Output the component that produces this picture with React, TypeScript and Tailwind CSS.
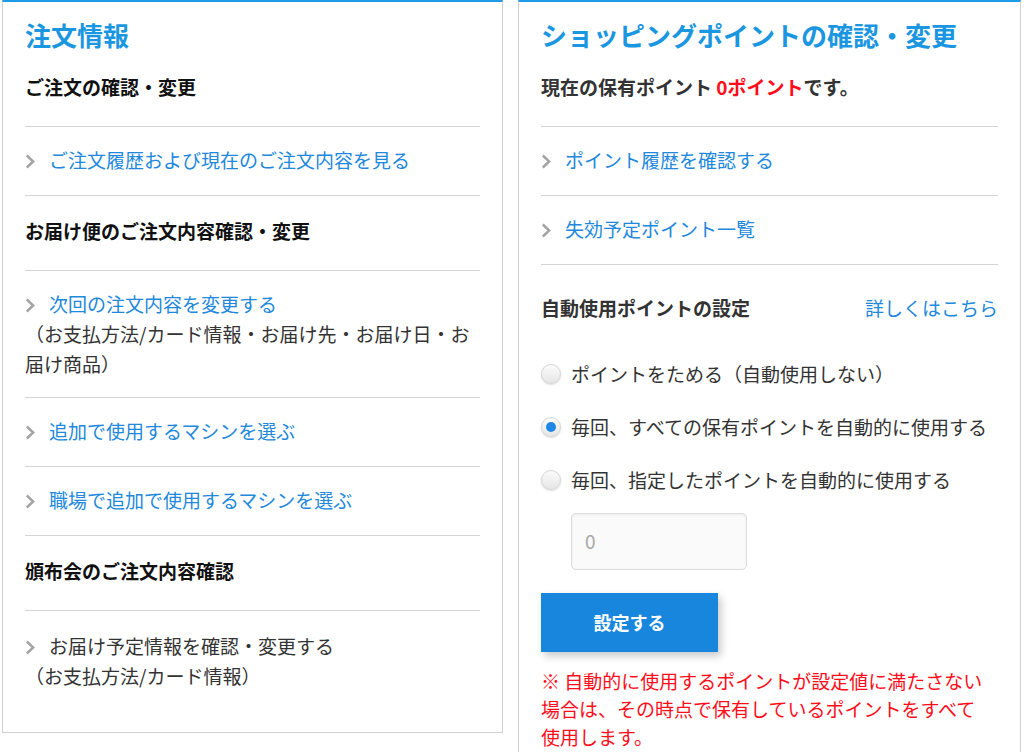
import type { ReactNode } from 'react'

function Chevron() {
  return (
    <svg className="mr-[14px] inline-block align-[-1px]" width="10" height="15" viewBox="0 0 10 15" fill="none">
      <polyline points="1.8,1.5 8.2,7.5 1.8,13.5" stroke="#a3a3a3" strokeWidth="2.4" />
    </svg>
  )
}

function LinkRow({ label, note, className, plain }: { label: string; note?: string; className: string; plain?: boolean }) {
  return (
    <div className={`border-b border-[#d4d4d4] leading-[30px] ${className}`}>
      <Chevron />
      <span className={plain ? 'text-[#333]' : 'text-[#2188dc]'}>{label}</span>
      {note && (
        <>
          <br />
          <span className="text-[#333]">{note}</span>
        </>
      )}
    </div>
  )
}

function SubHeading({ children }: { children: ReactNode }) {
  return <div className="border-b border-[#d4d4d4] pt-[20px] pb-[24px] font-bold leading-[30px] text-[#111]">{children}</div>
}

function Radio({ checked, label }: { checked?: boolean; label: string }) {
  return (
    <label className="flex items-center gap-[10px] leading-[30px] text-[#333]">
      <span className="flex h-[20px] w-[20px] items-center justify-center rounded-full border border-[#d6d6d6] bg-gradient-to-b from-[#fbfbfb] to-[#e6e6e6] shadow-[0_1px_2px_rgba(0,0,0,0.15)]">
        {checked && <span className="h-[10px] w-[10px] rounded-full bg-[#1e88e5]" />}
      </span>
      {label}
    </label>
  )
}

export default function App() {
  return (
    <div className="flex min-h-screen items-start gap-[15px] bg-white pl-[2px] font-['Noto_Sans_CJK_JP',sans-serif] text-[19px]">
      <section className="w-[501px] border border-t-2 border-[#d0d0d0] border-t-[#1e9be6] px-[22px] pt-[16px] pb-[41px]">
        <h1 className="text-[26px] leading-[34px] font-bold text-[#1b96e0]">注文情報</h1>
        <SubHeading>ご注文の確認・変更</SubHeading>
        <LinkRow label="ご注文履歴および現在のご注文内容を見る" className="pt-[18px] pb-[20px]" />
        <SubHeading>お届け便のご注文内容確認・変更</SubHeading>
        <LinkRow
          label="次回の注文内容を変更する"
          note="（お支払方法/カード情報・お届け先・お届け日・お届け商品）"
          className="pt-[18px] pb-[18px]"
        />
        <LinkRow label="追加で使用するマシンを選ぶ" className="pt-[18px] pb-[20px]" />
        <LinkRow label="職場で追加で使用するマシンを選ぶ" className="pt-[18px] pb-[20px]" />
        <SubHeading>頒布会のご注文内容確認</SubHeading>
        <LinkRow
          label="お届け予定情報を確認・変更する"
          note="（お支払方法/カード情報）"
          plain
          className="border-b-0 pt-[20px]"
        />
      </section>

      <section className="w-[503px] border border-t-2 border-[#d0d0d0] border-t-[#1e9be6] px-[22px] pt-[16px] pb-[30px]">
        <h1 className="text-[26px] leading-[34px] font-bold text-[#1b96e0]">ショッピングポイントの確認・変更</h1>
        <div className="border-b border-[#d4d4d4] pt-[20px] pb-[24px] font-bold leading-[30px] text-[#333]">
          現在の保有ポイント <span className="text-[#ff0d1a]">0ポイント</span>です。
        </div>
        <LinkRow label="ポイント履歴を確認する" className="pt-[18px] pb-[20px]" />
        <LinkRow label="失効予定ポイント一覧" className="pt-[18px] pb-[20px]" />

        <div className="flex items-center justify-between pt-[28px] leading-[30px]">
          <span className="font-bold text-[#333]">自動使用ポイントの設定</span>
          <a className="text-[#2188dc]">詳しくはこちら</a>
        </div>

        <div className="mt-[36px] flex flex-col gap-[23px]">
          <Radio label="ポイントをためる（自動使用しない）" />
          <Radio checked label="毎回、すべての保有ポイントを自動的に使用する" />
          <Radio label="毎回、指定したポイントを自動的に使用する" />
        </div>

        <div className="mt-[18px] ml-[30px] flex h-[57px] w-[176px] items-center rounded-[5px] border border-[#dcdcdc] bg-[#fafafa] pl-[13px] text-[#a8a8a8] shadow-[inset_0_1px_3px_rgba(0,0,0,0.06)]">
          0
        </div>

        <button
          type="button"
          className="mt-[23px] flex h-[59px] w-[177px] items-center justify-center bg-[#1886dc] text-[18px] font-bold text-white shadow-[3px_4px_8px_rgba(0,0,0,0.22)]"
        >
          設定する
        </button>

        <p className="mt-[15px] pr-[4px] leading-[28px] text-[#ff0d1a]">
          ※ 自動的に使用するポイントが設定値に満たさない場合は、その時点で保有しているポイントをすべて使用します。
        </p>
      </section>
    </div>
  )
}
